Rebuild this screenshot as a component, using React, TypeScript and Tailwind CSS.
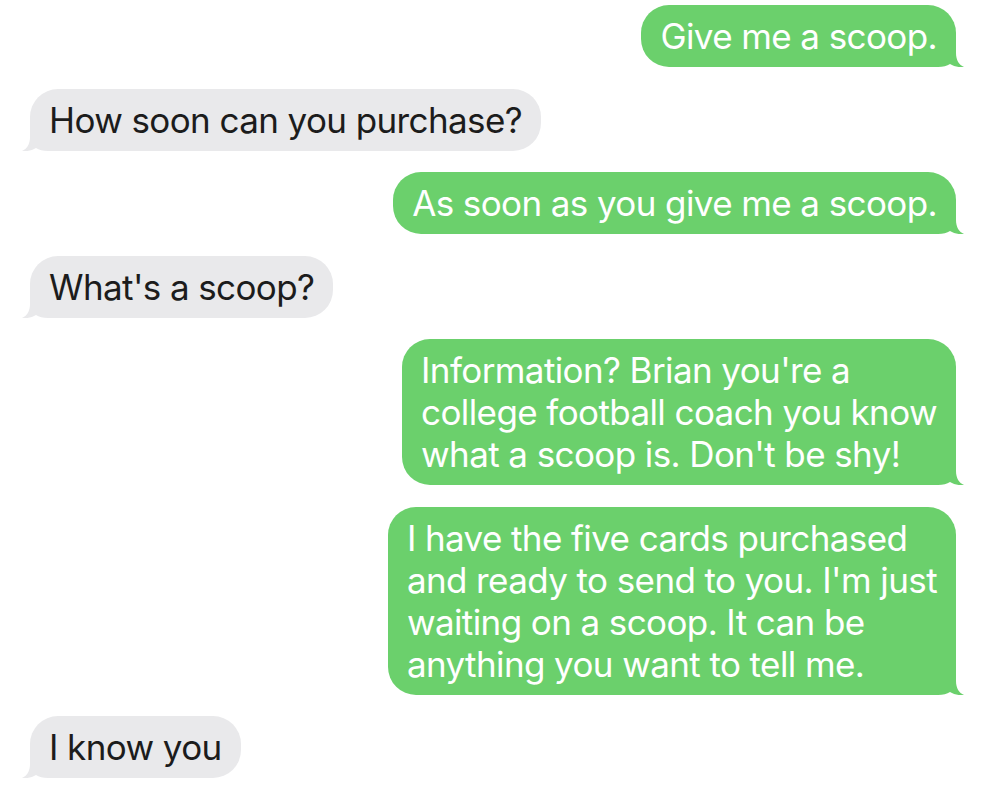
type Msg = { from: 'me' | 'them'; lines: string[] };

const messages: Msg[] = [
  { from: 'me', lines: ['Give me a scoop.'] },
  { from: 'them', lines: ['How soon can you purchase?'] },
  { from: 'me', lines: ['As soon as you give me a scoop.'] },
  { from: 'them', lines: ["What's a scoop?"] },
  {
    from: 'me',
    lines: ["Information? Brian you're a", 'college football coach you know', "what a scoop is. Don't be shy!"],
  },
  {
    from: 'me',
    lines: [
      'I have the five cards purchased',
      "and ready to send to you. I'm just",
      'waiting on a scoop. It can be',
      'anything you want to tell me.',
    ],
  },
  { from: 'them', lines: ['I know you'] },
];

function Tail({ side, color }: { side: 'left' | 'right'; color: string }) {
  const d = 'M0,0 L28,0 L28,16 C28,23 31,28 36,30 C31,30.6 26,29.5 22,27 C19,29 15,30 10,30 L0,30 Z';
  return (
    <svg
      width="36"
      height="30"
      viewBox="0 0 36 30"
      className={side === 'right' ? 'absolute bottom-0 right-[-8px]' : 'absolute bottom-0 left-[-8px] -scale-x-100'}
    >
      <path d={d} fill={color} />
    </svg>
  );
}

function Bubble({ msg }: { msg: Msg }) {
  const mine = msg.from === 'me';
  return (
    <div className={mine ? 'flex justify-end pr-[30px]' : 'flex justify-start pl-[30px]'}>
      <div
        className={
          mine
            ? 'relative rounded-[28px] bg-[#6bd06c] px-[19px] py-[10px] text-white'
            : 'relative rounded-[28px] bg-[#e9e9eb] px-[19px] py-[10px] text-[#1c1c1c]'
        }
      >
        <Tail side={mine ? 'right' : 'left'} color={mine ? '#6bd06c' : '#e9e9eb'} />
        <p className="relative whitespace-nowrap text-[35px] leading-[42px] tracking-[-0.6px]">
          {msg.lines.map((l, i) => (
            <span key={i}>
              {l}
              {i < msg.lines.length - 1 && <br />}
            </span>
          ))}
        </p>
      </div>
    </div>
  );
}

export default function App() {
  return (
    <div className="flex min-h-[790px] w-[986px] flex-col gap-[21.5px] bg-white pt-[5px] font-['Inter',sans-serif]">
      {messages.map((m, i) => (
        <Bubble key={i} msg={m} />
      ))}
    </div>
  );
}
